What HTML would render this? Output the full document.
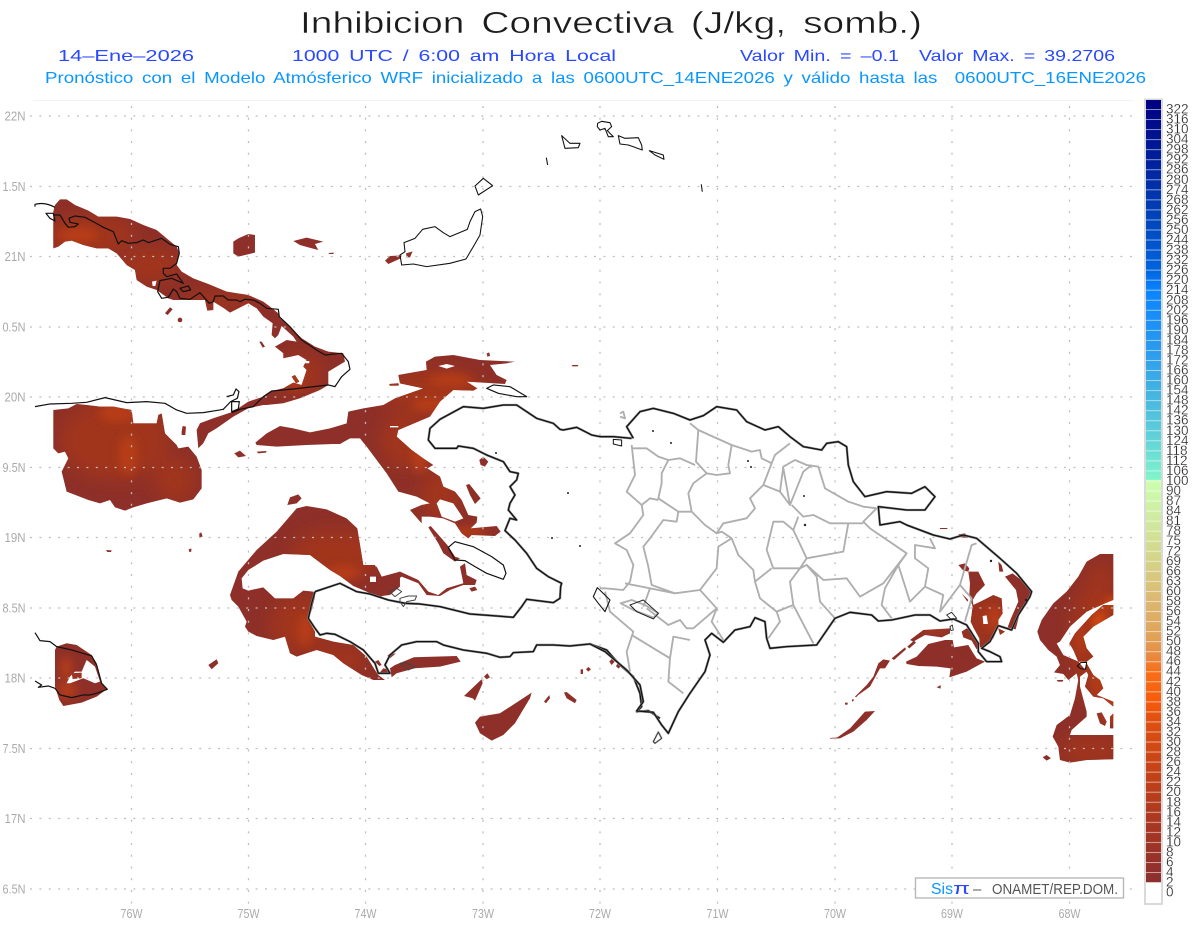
<!DOCTYPE html>
<html lang="es">
<head>
<meta charset="utf-8">
<title>Inhibicion Convectiva</title>
<style>
html,body{margin:0;padding:0;background:#fff;width:1200px;height:927px;overflow:hidden}
svg{display:block;font-family:"Liberation Sans",sans-serif}
.c text{font-size:13.5px;fill:#222;stroke:#fff;stroke-width:.22px}
.a text{font-size:13px;fill:#aaa}
.l text{text-anchor:end}
.b text{text-anchor:middle}
</style>
</head>
<body>
<svg width="1200" height="927" viewBox="0 0 1200 927" xmlns="http://www.w3.org/2000/svg">
<defs>
<filter id="bl" x="-50%" y="-50%" width="200%" height="200%"><feGaussianBlur stdDeviation="8"/></filter>
<filter id="bs" x="-50%" y="-50%" width="200%" height="200%"><feGaussianBlur stdDeviation="4.5"/></filter>
<linearGradient id="cb" gradientUnits="userSpaceOnUse" x1="0" y1="100" x2="0" y2="882.5">
<stop offset="0" stop-color="#000080"/>
<stop offset=".077" stop-color="#001f9c"/>
<stop offset=".153" stop-color="#0045bb"/>
<stop offset=".217" stop-color="#0064de"/>
<stop offset=".243" stop-color="#0a84ff"/>
<stop offset=".319" stop-color="#2a9bef"/>
<stop offset=".383" stop-color="#48b8e0"/>
<stop offset=".435" stop-color="#62d4d8"/>
<stop offset=".485" stop-color="#80f5cc"/>
<stop offset=".486" stop-color="#ccffb0"/>
<stop offset=".537" stop-color="#d0eaa0"/>
<stop offset=".588" stop-color="#d4d488"/>
<stop offset=".639" stop-color="#dcb870"/>
<stop offset=".69" stop-color="#e2a055"/>
<stop offset=".716" stop-color="#ec8338"/>
<stop offset=".729" stop-color="#f87018"/>
<stop offset=".767" stop-color="#f85c0c"/>
<stop offset=".792" stop-color="#e05010"/>
<stop offset=".869" stop-color="#c04018"/>
<stop offset=".933" stop-color="#a63623"/>
<stop offset="1" stop-color="#8c2f2f"/>
</linearGradient>
<pattern id="sep" patternUnits="userSpaceOnUse" x="0" y="109" width="20" height="10.04">
<rect x="0" y="0" width="20" height="1" fill="#fff" fill-opacity=".55"/>
</pattern>
<g id="red">
<g transform="translate(0,90) scale(.3333)">
<path d="M160,475L160,365L165,345L180,328L200,328L225,345L265,362L295,380L350,380L390,387L430,405L470,420L500,445L530,470L538,490L530,525L545,545L580,565L625,582L680,605L745,615L790,635L810,650L835,670L840,685L870,710L905,745L945,770L985,785L1030,790L1035,815L985,845L985,885L960,900L900,925L850,940L800,945L790,945L745,955L700,980L650,1015L625,1030L610,1060L595,1075L590,1020L600,1000L640,985L700,965L745,935L790,920L810,905L850,895L880,878L905,885L920,840L910,830L920,810L895,795L850,805L850,790L825,770L860,750L890,755L880,740L845,708L835,735L825,745L815,735L818,700L790,680L770,655L745,640L690,668L672,655L640,635L640,660L622,662L615,630L520,630L505,625L470,600L440,590L410,570L405,540L380,525L350,490L325,475L290,475L250,465L215,452L195,455L175,470Z"/>
<path d="M700,455L715,445L745,432L765,435L765,488L715,500L700,490Z"/>
<path d="M880,453L920,443L970,455L945,462L955,480L925,472L900,465Z"/>
<path d="M985,489L1002,488L1000,492L988,492Z"/>
<path d="M495,670L510,652L518,658L503,675Z"/>
<path d="M533,690a7,7 0 1,0 14,0a7,7 0 1,0 -14,0Z"/>
<path d="M778,755L785,755L795,770L788,773Z"/>
<path d="M875,860L885,855L898,875L888,880Z"/>
<path d="M1168,882L1195,880L1197,886L1170,887Z"/>
</g>
<g transform="translate(0,400) scale(.3333)">
<path d="M160,30L205,25L230,12L260,15L300,20L340,20L395,30L400,70L455,70L470,70L475,45L485,40L495,100L530,135L535,145L565,140L590,170L605,210L605,265L580,298L540,308L500,295L440,310L400,322L375,332L345,322L330,300L300,310L265,300L200,275L195,255L185,215L205,175L195,155L175,160L160,145Z"/>
<path d="M545,95L548,78L558,80L556,105L545,105Z"/>
<path d="M703,160L720,152L738,168L715,172Z"/>
<path d="M770,155L800,153L798,158L775,160Z"/>
<path d="M690,585L715,515L770,450L830,395L890,325L920,318L980,328L1040,355L1072,385L1090,495L1125,495L1145,540L1200,515L1200,560L1170,585L1130,590L1100,575L1060,558L1020,528L990,510L930,465L850,462L790,482L745,510L725,535L728,565L745,572L790,562L825,595L880,595L910,572L940,575L945,590L935,630L925,660L945,695L945,710L1000,725L1060,735L1100,770L1125,810L1135,825L1155,840L1120,840L1085,825L1030,790L1000,765L950,750L920,760L890,770L870,760L855,710L820,720L770,708L745,695L735,680L740,665L715,620L695,600Z"/>
<path d="M625,795L650,778L655,790L635,808Z"/>
<path d="M862,315L870,292L895,283L905,295L890,310Z"/>
<path d="M318,450L335,451L333,456L322,456Z"/>
<path d="M598,400L604,397L608,410L598,412Z"/>
<path d="M566,448L574,445L574,455L568,456Z"/>
<path d="M165,750L170,740L200,730L230,735L275,765L290,790L305,850L320,868L290,890L245,908L190,918L178,900L165,860Z"/>
</g>
<g transform="translate(340,340) scale(.3333)">
<path d="M-254,308L-220,280L-180,258L-140,265L-90,277L-30,265L20,250L25,215L70,205L130,195L165,175L250,145L180,130L175,105L260,90L258,65L285,50L340,45L420,60L525,65L500,70L450,75L470,105L500,120L495,132L380,125L412,145L400,152L340,150L300,185L270,230L175,270L170,290L215,330L250,355L280,375L262,385L300,410L310,440L345,455L365,480L385,525L412,530L410,548L392,565L470,558L482,575L465,588L395,585L385,595L365,580L345,550L310,535L270,530L245,530L245,550L210,510L245,495L270,490L230,470L175,455L140,400L80,320L60,295L30,295L0,312L-20,312L-100,315L-190,320L-250,315Z"/>
<path d="M148,133L175,132L174,137L150,137Z"/>
<path d="M440,40L448,37L450,48L442,50Z"/>
<path d="M695,75L715,75L713,79L698,79Z"/>
<path d="M378,435L388,432L422,475L405,492L390,465Z"/>
<path d="M418,360L430,350L445,365L435,380L422,375Z"/>
<path d="M265,562L272,558L300,590L322,615L345,650L360,655L345,665L310,640L295,610Z"/>
<path d="M60,745L85,690L110,680L125,710L180,695L235,720L265,755L295,765L320,745L370,730L360,680L375,670L380,705L410,720L405,735L370,735L330,750L300,768L260,765L235,730L185,710L150,735L125,770L95,762Z"/>
<path d="M388,745L405,740L412,750L395,755Z"/>
<path d="M150,985L165,975L222,952L350,948L362,965L300,980L225,985L170,1000L155,1012Z"/>
<path d="M130,985L150,990L135,1003L115,1003Z"/>
<path d="M105,965L115,960L125,975L118,978Z"/>
<path d="M142,945L168,940L150,955Z"/>
<path d="M432,1010L442,1000L450,1012L440,1018Z"/>
<path d="M372,1068L425,1018L428,1030L405,1082L398,1075Z"/>
<path d="M405,1148L420,1130L480,1120L575,1058L570,1075L525,1150L490,1185L455,1202L420,1180Z"/>
<path d="M612,1085L628,1065L630,1075L618,1090Z"/>
<path d="M672,1058L680,1056L710,1080L705,1090L680,1075Z"/>
<path d="M808,965L815,957L824,965L815,975Z"/>
<path d="M828,978L835,968L844,978L835,986Z"/>
<path d="M738,988L745,981L753,988L745,995Z"/>
<path d="M722,988L729,988L729,1002L722,1002Z"/>
</g>
<g transform="translate(590,395) scale(.3333)">
<path d="M1105,418L1125,415L1135,428L1115,428Z"/>
<path d="M1050,399L1072,399L1072,402L1050,402Z"/>
</g>
<g transform="translate(830,540) scale(.3333)">
<path d="M385,75L405,70L418,85L415,95L400,92Z"/>
<path d="M415,95L445,95L465,135L440,160L428,180L430,195L465,178L490,165L515,175L518,220L505,240L505,262L490,295L465,320L450,322L448,295L430,262L422,245L428,200L418,165L420,130Z"/>
<path d="M395,275L410,265L425,272L440,300L445,320L440,328L425,302L400,292Z"/>
<path d="M525,110L548,100L580,125L603,155L592,190L568,225L557,268L533,262L543,235L565,185L558,150Z"/>
<path d="M505,65L515,75L520,95L508,95Z"/>
<path d="M505,265L525,275L510,285Z"/>
<path d="M395,160L415,180L412,185Z"/>
<path d="M280,270L360,265L360,280L335,292L285,285L250,305L240,300Z"/>
<path d="M75,470L110,435L130,410L145,370L160,358L180,362L165,385L150,385L120,440L85,465L78,472Z"/>
<path d="M185,355L225,322L228,328L192,360Z"/>
<path d="M232,320L252,302L258,308L238,325Z"/>
<path d="M228,365L260,350L295,312L345,300L368,300L372,322L415,315L430,340L440,355L465,365L410,395L358,412L362,385L320,380L265,378L230,372Z"/>
<path d="M320,442L332,435L332,446Z"/>
<path d="M45,488L53,488L53,494L45,494Z"/>
<path d="M66,478L72,478L70,484L66,484Z"/>
<path d="M0,594L22,592L60,565L105,515L135,513L110,540L70,575L30,595L0,596Z"/>
<path d="M850,42L810,42L770,65L745,110L710,155L670,190L635,240L622,275L630,300L655,330L680,350L690,375L672,397L700,402L715,420L740,400L745,420L735,475L720,525L680,555L668,590L685,620L690,660L720,668L770,660L850,658L850,585L720,585L725,570L770,530L770,515L750,440L750,410L770,395L745,365L700,345L680,310L690,305L720,260L770,215L825,190L850,180Z"/>
<path d="M850,195L820,195L785,225L735,280L718,310L730,330L745,365L770,365L790,350L770,325L760,290L790,260L850,225Z"/>
<path d="M770,370L790,405L810,420L820,445L800,465L850,485L850,565L840,565L840,530L850,520L850,500L820,475L790,470L765,440L775,405L765,385Z"/>
<path d="M800,520L815,517L830,545L825,558L810,550Z"/>
<path d="M638,652L650,645L663,655L650,662Z"/>
<path d="M680,420L700,420L698,425L684,425Z"/>
</g>
<g transform="translate(380,110) scale(.3333)">
<path d="M15,452L30,438L65,436L62,445L25,462Z"/>
<path d="M78,430L98,424L90,442L80,442Z"/>
</g>
</g>
<mask id="m" maskUnits="userSpaceOnUse" x="0" y="0" width="1200" height="927"><use href="#red" fill="#fff"/></mask>
</defs>

<rect width="1200" height="927" fill="#fff"/>

<!-- Titles -->
<text x="300" y="33" font-size="31" fill="#1c1c1c" stroke="#fff" stroke-width=".45" word-spacing="5" textLength="622" lengthAdjust="spacingAndGlyphs">Inhibicion Convectiva (J/kg, somb.)</text>
<g font-size="16" fill="#2a48ff" word-spacing="3">
<text x="58" y="61" textLength="136" lengthAdjust="spacingAndGlyphs">14–Ene–2026</text>
<text x="292" y="61" textLength="324" lengthAdjust="spacingAndGlyphs">1000 UTC / 6:00 am Hora Local</text>
<text x="740" y="61" textLength="159" lengthAdjust="spacingAndGlyphs">Valor Min. = –0.1</text>
<text x="919" y="61" textLength="196" lengthAdjust="spacingAndGlyphs">Valor Max. = 39.2706</text>
</g>
<text x="45" y="83" font-size="16" fill="#0a96ff" word-spacing="3" textLength="1101" lengthAdjust="spacingAndGlyphs" xml:space="preserve">Pronóstico con el Modelo Atmósferico WRF inicializado a las 0600UTC_14ENE2026 y válido hasta las  0600UTC_16ENE2026</text>

<!-- plot top edge -->
<line x1="33" y1="100.5" x2="1133" y2="100.5" stroke="#f3f3f3"/>

<!-- red field -->
<use href="#red" fill="#8e3029"/>
<g mask="url(#m)">
<g fill="#a0361f" filter="url(#bl)">
<ellipse cx="90" cy="235" rx="45" ry="20"/>
<ellipse cx="150" cy="265" rx="30" ry="18"/>
<ellipse cx="220" cy="300" rx="40" ry="8"/>
<ellipse cx="300" cy="375" rx="22" ry="20"/>
<ellipse cx="115" cy="440" rx="55" ry="40"/>
<ellipse cx="175" cy="480" rx="20" ry="22"/>
<ellipse cx="335" cy="555" rx="45" ry="25"/>
<ellipse cx="300" cy="625" rx="30" ry="28"/>
<ellipse cx="340" cy="660" rx="25" ry="15"/>
<ellipse cx="430" cy="390" rx="55" ry="20"/>
<ellipse cx="405" cy="440" rx="25" ry="28"/>
<ellipse cx="440" cy="495" rx="20" ry="25"/>
<ellipse cx="985" cy="620" rx="18" ry="25"/>
<ellipse cx="1095" cy="640" rx="25" ry="60"/>
<ellipse cx="1100" cy="590" rx="14" ry="28"/>
<ellipse cx="1090" cy="750" rx="30" ry="14"/>
</g>
<g fill="#bd4019" filter="url(#bs)" opacity=".8">
<ellipse cx="78" cy="235" rx="20" ry="8"/>
<ellipse cx="117" cy="413" rx="18" ry="9"/>
<ellipse cx="128" cy="455" rx="9" ry="20"/>
<ellipse cx="343" cy="573" rx="18" ry="7"/>
<ellipse cx="305" cy="630" rx="7" ry="16"/>
<ellipse cx="430" cy="405" rx="18" ry="7"/>
<ellipse cx="450" cy="380" rx="22" ry="6"/>
<ellipse cx="420" cy="458" rx="8" ry="16"/>
<ellipse cx="467" cy="532" rx="20" ry="5"/>
<ellipse cx="67" cy="690" rx="10" ry="8"/>
<ellipse cx="66" cy="668" rx="6" ry="12"/>
<ellipse cx="295" cy="383" rx="6" ry="5"/>
<ellipse cx="995" cy="618" rx="7" ry="14"/>
<ellipse cx="1000" cy="590" rx="4" ry="8"/>
<ellipse cx="1109" cy="705" rx="8" ry="20"/>
<ellipse cx="1097" cy="683" rx="5" ry="14"/>
<ellipse cx="1100" cy="618" rx="8" ry="12"/>
<ellipse cx="1080" cy="640" rx="5" ry="15"/>
<ellipse cx="935" cy="630" rx="14" ry="3"/>
</g>
<g fill="#e55010" filter="url(#bs)" opacity=".8">
<ellipse cx="1098" cy="622" rx="5" ry="8"/>
<ellipse cx="1112" cy="602" rx="8" ry="4"/>
</g>
</g>

<!-- white holes -->
<g fill="#fff">
<path transform="translate(340,340) scale(.3333)" d="M290,490L300,478L340,490L370,535L345,545L305,530ZM295,78L320,72L345,78L320,86ZM150,258H175V262H150ZM90,710H108V726H90Z"/>
<path transform="translate(0,400) scale(.3333)" d="M200,850L210,830L225,815L245,815L260,780L285,800L300,845L285,850L250,835L210,850Z"/>
<path transform="translate(0,90) scale(.3333)" d="M456,575L470,572L466,588L458,588ZM916,813L928,813L928,820L916,820Z"/>
<path transform="translate(830,540) scale(.3333)" d="M458,228L470,226L474,252L460,252Z"/>
</g>
<path transform="translate(0,400) scale(.3333)" d="M215,820L245,818L245,835L218,837Z" fill="#9a3423"/>

<!-- grid -->
<g stroke="#bebebe" stroke-width="1.3" fill="none">
<g stroke-dasharray="2 7.4">
<line x1="30" y1="116" x2="1134" y2="116"/>
<line x1="30" y1="186.5" x2="1134" y2="186.5"/>
<line x1="30" y1="256.5" x2="1134" y2="256.5"/>
<line x1="30" y1="327" x2="1134" y2="327"/>
<line x1="30" y1="397" x2="1134" y2="397"/>
<line x1="30" y1="467.5" x2="1134" y2="467.5"/>
<line x1="30" y1="537.5" x2="1134" y2="537.5"/>
<line x1="30" y1="608" x2="1134" y2="608"/>
<line x1="30" y1="678" x2="1134" y2="678"/>
<line x1="30" y1="748.5" x2="1134" y2="748.5"/>
<line x1="30" y1="818.5" x2="1134" y2="818.5"/>
<line x1="30" y1="889" x2="1134" y2="889"/>
</g>
<g stroke-dasharray="2 9.7">
<line x1="131.5" y1="106" x2="131.5" y2="906"/>
<line x1="248.5" y1="106" x2="248.5" y2="906"/>
<line x1="365.5" y1="106" x2="365.5" y2="906"/>
<line x1="483" y1="106" x2="483" y2="906"/>
<line x1="600" y1="106" x2="600" y2="906"/>
<line x1="717.5" y1="106" x2="717.5" y2="906"/>
<line x1="835" y1="106" x2="835" y2="906"/>
<line x1="952" y1="106" x2="952" y2="906"/>
<line x1="1069.5" y1="106" x2="1069.5" y2="906"/>
</g>
</g>

<!-- provinces -->
<g transform="translate(590,395) scale(.3333)" fill="none" stroke="#aeaeae" stroke-width="5.5" stroke-linejoin="round">
<path d="M300,85L325,105L425,150L485,170L510,165L515,190L545,205L555,180L600,145"/>
<path d="M325,105L318,200L350,235L380,240L420,235L415,210L425,150"/>
<path d="M125,160L170,160L205,185L235,195L270,190L315,210"/>
<path d="M235,195L215,235L215,265L205,310L265,350L305,350L295,295L310,265L350,235"/>
<path d="M125,150L135,240L110,290L155,330L180,310L205,315"/>
<path d="M155,330L160,360L120,415L75,445L110,465L130,510L120,560L100,585L45,580L30,580"/>
<path d="M45,590L60,650L130,710L110,770L120,830"/>
<path d="M265,350L260,380L220,375L180,430L160,455L175,515L185,570L255,595L330,585L380,520L385,455L425,430L395,410L380,415L345,390L305,350"/>
<path d="M380,415L400,385L470,370L495,340L480,310L520,270L570,290L580,215L615,195L650,210L685,215L705,280L775,320L820,335L860,340"/>
<path d="M520,270L545,205M570,290L600,330L580,220M600,330L640,230L665,210"/>
<path d="M605,330L640,365L670,360L720,385L775,385L760,470L650,490L610,405L625,365"/>
<path d="M650,490L630,520L550,520L530,465L550,380L580,380L610,405"/>
<path d="M425,430L445,480L490,525L495,560L545,520"/>
<path d="M495,560L510,610L560,650L610,630L600,560L630,520L650,510L680,545L690,620L735,670"/>
<path d="M610,630L670,745M560,650L570,680L535,730"/>
<path d="M650,510L700,555L770,550L810,605L880,565L950,475L840,400L820,380L860,340"/>
<path d="M775,385L820,385"/>
<path d="M950,475L925,510L885,580L875,630L905,670"/>
<path d="M925,510L960,620L1005,575L1015,520L975,490L975,450L1035,460L1020,430"/>
<path d="M1005,575L1060,600L1050,650L1110,570L1145,610L1125,680"/>
<path d="M1110,570L1145,450L1160,445"/>
<path d="M330,585L380,640L365,680L400,735"/>
<path d="M380,640L310,700L290,700L270,675L235,690L170,640"/>
<path d="M180,580L160,635M105,565L255,595"/>
<path d="M125,720L240,790L235,860L280,895M240,790L250,725L300,735"/>
<path d="M92,625L130,645L190,668L205,655L165,630L125,615Z"/>
<path d="M190,1040L205,1010L215,1030L195,1045Z"/>
<path d="M90,55L100,50L105,70L90,65"/>
</g>

<!-- coastlines -->
<g fill="none" stroke-linejoin="round">
<g stroke="#111" stroke-width="3.6" transform="translate(0,90) scale(.3333)">
<path d="M105,350L105,343Q135,335 165,352M138,370L160,370L165,393L150,385Z"/>
<path d="M160,375L180,375L195,400L205,412L225,410L235,402L210,397L207,385L225,378L255,382L285,398L310,412L340,425L355,462L365,452L385,460L410,458L430,450L445,458L485,445L510,463L535,470L538,490L530,520L510,535L490,535L490,550L500,560L530,552L550,580L515,565L480,572L473,605L485,625L505,622L520,597L530,605L540,625L570,628L600,608L615,625L628,640L640,635L645,618L670,618L685,630L710,630L720,635L735,628L760,630L780,640L800,655L835,658L838,680L870,710L905,750L950,780L975,795L1025,790L1045,815L1050,838L1025,860L1005,890L985,885L880,897L815,903L790,920L760,950L720,958L695,968"/>
<path d="M540,595L565,588L572,600L550,605Z"/>
<path d="M695,965L695,935L718,935L715,957Z"/>
<path d="M680,920L700,915L708,897L717,905L712,925L692,935L668,960"/>
<path d="M105,950L150,942L215,940L260,937L315,923L380,938L440,935L495,940L530,960L560,970L610,968L660,960L668,958"/>
</g>
<g stroke="#111" stroke-width="3.6" transform="translate(0,400) scale(.3333)">
<path d="M105,698L120,722L150,725L170,740L215,750L275,768L290,795L305,850L322,868L290,880L270,885L250,885L215,893L180,885L165,865L145,858L115,862L125,855L105,843"/>
</g>
<g transform="translate(340,340) scale(.3333)">
<path stroke="#888" stroke-width="7" d="M-75,755L0,730L50,755L90,762L145,780L195,790L240,792L300,800L390,822L470,828L520,832L545,800L560,778L640,788L660,775L662,740L665,730L625,710L590,685L560,640L525,600L495,572L510,535L530,540L505,510L510,490L525,465L510,440L530,420L535,400L510,395L490,365L440,345L400,325L355,318L350,325L285,325L265,300L270,265L300,238L370,200L430,205L490,195L530,195L590,235L640,250L660,268L670,270L710,262L755,285L780,290L820,290L875,295"/>
<path stroke="#888" stroke-width="7" d="M-75,755L-85,790L-95,835L-75,865L-60,885L-40,880L-15,883L30,905L70,930L105,970L115,1000L150,1000L135,975L150,945L185,915L230,905L290,905L310,915L370,930L440,940L480,952L510,950L520,938L580,935L590,915L640,915L690,918L750,912L800,930L840,975L880,1010L900,1060L905,1100L890,1115L925,1112L960,1135"/>
<path stroke="#111" stroke-width="3.8" d="M-75,755L0,730L50,755L90,762L145,780L195,790L240,792L300,800L390,822L470,828L520,832L545,800L560,778L640,788L660,775L662,740L665,730L625,710L590,685L560,640L525,600L495,572L510,535L530,540L505,510L510,490L525,465L510,440L530,420L535,400L510,395L490,365L440,345L400,325L355,318L350,325L285,325L265,300L270,265L300,238L370,200L430,205L490,195L530,195L590,235L640,250L660,268L670,270L710,262L755,285L780,290L820,290L875,295"/>
<path stroke="#111" stroke-width="3.8" d="M-75,755L-85,790L-95,835L-75,865L-60,885L-40,880L-15,883L30,905L70,930L105,970L115,1000L150,1000L135,975L150,945L185,915L230,905L290,905L310,915L370,930L440,940L480,952L510,950L520,938L580,935L590,915L640,915L690,918L750,912L800,930L840,975L880,1010L900,1060L905,1100L890,1115L925,1112L960,1135"/>
<path stroke="#111" stroke-width="3.6" d="M325,622L345,605L400,620L455,650L490,675L498,700L490,718L440,700L405,680L375,662L345,660Z"/>
<path stroke="#111" stroke-width="3.4" d="M440,145L460,135L510,140L560,170L530,170L475,160Z"/>
<path stroke="#444" stroke-width="3" d="M148,755L170,745L185,755L165,770ZM180,775L205,768L230,768L225,780L200,785L190,800L180,785ZM180,970L195,968L225,980L205,990Z"/>
<path stroke="#111" stroke-width="3" d="M820,298L845,300L845,318L820,312Z"/>
</g>
<g transform="translate(590,395) scale(.3333)">
<path stroke="#888" stroke-width="7" d="M0,747L45,770L110,825L150,870L160,920L140,948L190,952L215,990L235,1015L265,950L300,895L345,830L360,780L345,735L365,715L400,742L435,705L480,695L495,668L525,680L530,730L540,760L590,755L680,750L735,670L780,652L845,660L865,678L905,675L975,660L1020,660L1050,678L1090,672L1130,690L1165,745L1165,770L1190,800L1235,800L1230,785L1200,770L1175,760L1200,740L1225,692L1265,705L1285,660L1320,605L1325,590L1280,535L1230,490L1160,430L1120,420L1080,432L1030,420L950,390L930,380L870,390L865,335L950,345L1005,345L1035,305L1005,275L965,295L890,290L825,305L790,260L775,210L770,155L745,140L710,145L695,165L640,155L600,125L565,95L525,105L470,80L440,45L380,35L340,62L300,75L250,55L190,40L150,50L110,95L130,130"/>
<path stroke="#111" stroke-width="3.8" d="M0,747L45,770L110,825L150,870L160,920L140,948L190,952L215,990L235,1015L265,950L300,895L345,830L360,780L345,735L365,715L400,742L435,705L480,695L495,668L525,680L530,730L540,760L590,755L680,750L735,670L780,652L845,660L865,678L905,675L975,660L1020,660L1050,678L1090,672L1130,690L1165,745L1165,770L1190,800L1235,800L1230,785L1200,770L1175,760L1200,740L1225,692L1265,705L1285,660L1320,605L1325,590L1280,535L1230,490L1160,430L1120,420L1080,432L1030,420L950,390L930,380L870,390L865,335L950,345L1005,345L1035,305L1005,275L965,295L890,290L825,305L790,260L775,210L770,155L745,140L710,145L695,165L640,155L600,125L565,95L525,105L470,80L440,45L380,35L340,62L300,75L250,55L190,40L150,50L110,95L130,130"/>
<path stroke="#111" stroke-width="3.2" d="M10,605L22,578L60,615L45,650L25,625Z"/>
<path stroke="#222" stroke-width="3" d="M120,630L160,615L205,655L190,672L140,650Z"/>
<path stroke="#222" stroke-width="2.6" d="M1070,660L1085,652L1100,670L1085,675ZM1080,695L1087,690L1090,705L1083,707Z"/>
<path stroke="#333" stroke-width="2.6" d="M190,1040L205,1012L215,1030L195,1045Z"/>
</g>
<g transform="translate(830,540) scale(.3333)" stroke="#111" stroke-width="3.2">
<path d="M742,378L752,368L770,367L767,388L752,386Z"/>
</g>
<g transform="translate(380,110) scale(.3333)" stroke="#111" stroke-width="3.2">
<path d="M65,465L60,435L75,425L72,398L105,385L128,358L165,350L190,368L210,380L262,358L270,335L285,305L302,297L308,320L300,375L280,410L258,447L210,460L140,470L100,462Z"/>
<path d="M285,228L310,205L338,227L295,255Z"/>
<path d="M545,77L570,100L600,100L595,113L555,115Z"/>
<path d="M653,40L665,34L690,38L695,50L682,62L700,80L685,80L675,55L660,60L652,50Z"/>
<path d="M715,77L735,85L775,83L785,105L787,120L745,105L720,102Z"/>
<path d="M808,122L850,135L852,148L825,135Z"/>
<path d="M499,143L503,165"/>
<path d="M964,223L967,245"/>
</g>
</g>
<!-- small islets -->
<g fill="#222">
<circle cx="496" cy="453" r="1"/><circle cx="568" cy="493" r="1"/><circle cx="552" cy="538" r="1"/><circle cx="580" cy="546" r="1"/>
<circle cx="653" cy="431" r="1"/><circle cx="671" cy="443" r="1"/><circle cx="748" cy="461" r="1"/><circle cx="751" cy="467" r="1"/>
<circle cx="804" cy="496" r="1"/><circle cx="805" cy="525" r="1.2"/><circle cx="991" cy="561" r="1.2"/><circle cx="1026" cy="600" r="1.2"/>
</g>

<!-- axis labels -->
<g class="a l">
<text x="25.5" y="120.5" textLength="21" lengthAdjust="spacingAndGlyphs">22N</text>
<text x="25.5" y="191" textLength="23" lengthAdjust="spacingAndGlyphs">1.5N</text>
<text x="25.5" y="261" textLength="21" lengthAdjust="spacingAndGlyphs">21N</text>
<text x="25.5" y="331.5" textLength="23" lengthAdjust="spacingAndGlyphs">0.5N</text>
<text x="25.5" y="401.5" textLength="21" lengthAdjust="spacingAndGlyphs">20N</text>
<text x="25.5" y="472" textLength="23" lengthAdjust="spacingAndGlyphs">9.5N</text>
<text x="25.5" y="542" textLength="21" lengthAdjust="spacingAndGlyphs">19N</text>
<text x="25.5" y="612.5" textLength="23" lengthAdjust="spacingAndGlyphs">8.5N</text>
<text x="25.5" y="682.5" textLength="21" lengthAdjust="spacingAndGlyphs">18N</text>
<text x="25.5" y="753" textLength="23" lengthAdjust="spacingAndGlyphs">7.5N</text>
<text x="25.5" y="823" textLength="21" lengthAdjust="spacingAndGlyphs">17N</text>
<text x="25.5" y="893.5" textLength="23" lengthAdjust="spacingAndGlyphs">6.5N</text>
</g>
<g class="a b">
<text x="131.5" y="918" textLength="22" lengthAdjust="spacingAndGlyphs">76W</text>
<text x="248.5" y="918" textLength="22" lengthAdjust="spacingAndGlyphs">75W</text>
<text x="365.5" y="918" textLength="22" lengthAdjust="spacingAndGlyphs">74W</text>
<text x="483" y="918" textLength="22" lengthAdjust="spacingAndGlyphs">73W</text>
<text x="600" y="918" textLength="22" lengthAdjust="spacingAndGlyphs">72W</text>
<text x="717.5" y="918" textLength="22" lengthAdjust="spacingAndGlyphs">71W</text>
<text x="835" y="918" textLength="22" lengthAdjust="spacingAndGlyphs">70W</text>
<text x="952" y="918" textLength="22" lengthAdjust="spacingAndGlyphs">69W</text>
<text x="1069.5" y="918" textLength="22" lengthAdjust="spacingAndGlyphs">68W</text>
</g>

<!-- attribution -->
<rect x="915.5" y="878" width="208" height="20" fill="#fff" stroke="#b8b8b8" stroke-width="1.4"/>
<text x="931" y="894" font-size="15.5" fill="#0a96ff" textLength="22" lengthAdjust="spacingAndGlyphs">Sis</text>
<text x="953" y="894" font-size="17" fill="#2a48ff" textLength="17" lengthAdjust="spacingAndGlyphs">π</text>
<text x="973" y="894" font-size="15" fill="#555">–</text>
<text x="992" y="894" font-size="15" fill="#555" textLength="126" lengthAdjust="spacingAndGlyphs">ONAMET/REP.DOM.</text>

<!-- colour bar -->
<rect x="1145" y="99.5" width="17" height="804.5" fill="#fff" stroke="#d6d6d6" stroke-width="1.8"/>
<rect x="1146" y="100" width="15" height="782.5" fill="url(#cb)"/>
<rect x="1146" y="100" width="15" height="782.5" fill="url(#sep)"/>
<g class="c">
<text x="1166" y="113.5">322</text><text x="1166" y="123.5">316</text><text x="1166" y="133.6">310</text><text x="1166" y="143.6">304</text><text x="1166" y="153.7">298</text><text x="1166" y="163.7">292</text><text x="1166" y="173.7">286</text><text x="1166" y="183.8">280</text><text x="1166" y="193.8">274</text><text x="1166" y="203.9">268</text><text x="1166" y="213.9">262</text><text x="1166" y="223.9">256</text><text x="1166" y="234">250</text><text x="1166" y="244">244</text><text x="1166" y="254.1">238</text><text x="1166" y="264.1">232</text><text x="1166" y="274.1">226</text><text x="1166" y="284.2">220</text><text x="1166" y="294.2">214</text><text x="1166" y="304.3">208</text><text x="1166" y="314.3">202</text><text x="1166" y="324.3">196</text><text x="1166" y="334.4">190</text><text x="1166" y="344.4">184</text><text x="1166" y="354.5">178</text><text x="1166" y="364.5">172</text><text x="1166" y="374.5">166</text><text x="1166" y="384.6">160</text><text x="1166" y="394.6">154</text><text x="1166" y="404.7">148</text><text x="1166" y="414.7">142</text><text x="1166" y="424.7">136</text><text x="1166" y="434.8">130</text><text x="1166" y="444.8">124</text><text x="1166" y="454.9">118</text><text x="1166" y="464.9">112</text><text x="1166" y="474.9">106</text><text x="1166" y="485">100</text>
<text x="1166" y="495">90</text><text x="1166" y="505.1">87</text><text x="1166" y="515.1">84</text><text x="1166" y="525.1">81</text><text x="1166" y="535.2">78</text><text x="1166" y="545.2">75</text><text x="1166" y="555.3">72</text><text x="1166" y="565.3">69</text><text x="1166" y="575.3">66</text><text x="1166" y="585.4">63</text><text x="1166" y="595.4">60</text><text x="1166" y="605.5">58</text><text x="1166" y="615.5">56</text><text x="1166" y="625.5">54</text><text x="1166" y="635.6">52</text><text x="1166" y="645.6">50</text><text x="1166" y="655.7">48</text><text x="1166" y="665.7">46</text><text x="1166" y="675.7">44</text><text x="1166" y="685.8">42</text><text x="1166" y="695.8">40</text><text x="1166" y="705.9">38</text><text x="1166" y="715.9">36</text><text x="1166" y="725.9">34</text><text x="1166" y="736">32</text><text x="1166" y="746">30</text><text x="1166" y="756.1">28</text><text x="1166" y="766.1">26</text><text x="1166" y="776.1">24</text><text x="1166" y="786.2">22</text><text x="1166" y="796.2">20</text><text x="1166" y="806.3">18</text><text x="1166" y="816.3">16</text><text x="1166" y="826.3">14</text><text x="1166" y="836.4">12</text><text x="1166" y="846.4">10</text><text x="1166" y="856.5">8</text><text x="1166" y="866.5">6</text><text x="1166" y="876.5">4</text><text x="1166" y="886.6">2</text><text x="1166" y="896.6">0</text>
</g>
</svg>
</body>
</html>
